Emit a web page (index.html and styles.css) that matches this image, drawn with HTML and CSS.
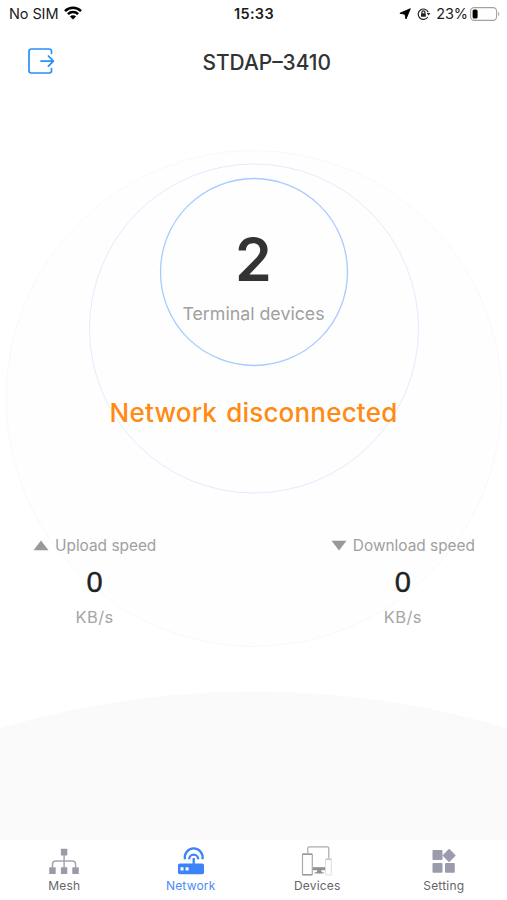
FILE: index.html
```html
<!DOCTYPE html>
<html lang="en">
<head>
<meta charset="utf-8">
<title>STDAP–3410</title>
<link rel="stylesheet" href="styles.css">
</head>
<body>
<div class="app">
  <div class="status">
    <div class="status-left">
      <span class="carrier">No SIM</span>
      <svg class="wifi" width="18" height="14" viewBox="0 0 18 14" fill="none" stroke="#000" stroke-width="2.5">
        <path d="M1 5.1a11.4 11.4 0 0 1 16 0"/>
        <path d="M3.9 8.2a7.2 7.2 0 0 1 10.2 0"/>
        <path d="M9 13.6L5.900 10.600a4.400 4.400 0 0 1 6.200 0z" fill="#000" stroke="none"/>
      </svg>
    </div>
    <span class="clock">15:33</span>
    <div class="status-right">
      <svg width="12" height="12" viewBox="0 0 12 12"><path d="M11.300.7L7 11 6 6.200.9 5.300z" fill="#000" stroke="#000" stroke-width=".9" stroke-linejoin="round"/></svg>
      <svg class="lock" width="14" height="12" viewBox="0 0 14 12" fill="none" stroke="#222" stroke-width="1.200">
        <path d="M10.800 9A5.200 5.200 0 1 1 11.200 4.200"/>
        <path d="M9.800 5h3.600l-1.800 2.600z" fill="#222" stroke="none"/>
        <path d="M4.900 5.500V4.300a1.500 1.500 0 0 1 3 0v1.200"/>
        <rect x="4" y="5.200" width="4.800" height="3.600" rx=".5" fill="#222" stroke="none"/>
      </svg>
      <span class="percent">23%</span>
      <svg width="31" height="14" viewBox="0 0 31 14">
        <rect x=".6" y=".6" width="26" height="12.800" rx="3.600" fill="none" stroke="#a2a2a2" stroke-width="1.100"/>
        <rect x="2.600" y="2.500" width="5" height="9" rx="1.600" fill="#000"/>
        <path d="M28.200 4.500q2.200 2.500 0 5z" fill="#a2a2a2"/>
      </svg>
    </div>
  </div>

  <header class="header">
    <svg class="exit" width="28" height="28" viewBox="0 0 28 28" fill="none" stroke="#2490f8" stroke-width="1.700" stroke-linecap="round" stroke-linejoin="round">
      <path d="M24.500 6.300V4.200a2.200 2.200 0 0 0-2.200-2.200H4.200A2.200 2.200 0 0 0 2 4.200v19.600A2.200 2.200 0 0 0 4.200 26h18.100a2.200 2.200 0 0 0 2.200-2.200v-2.100"/>
      <path d="M14 14.100h12M21.400 9l5 5.100-5 5.100"/>
    </svg>
    <h1 class="title">STDAP–3410</h1>
  </header>

  <main class="main">
    <svg class="backdrop" width="507" height="744" viewBox="0 96 507 744" fill="none">
      <circle cx="254" cy="1582" r="890.500" fill="#fafafa"/>
      <circle cx="254" cy="398.500" r="248" fill="#fefefe" stroke="#f7f9fa"/>
      <circle cx="254" cy="328.500" r="164.500" fill="#fefefe" stroke="#e5ebfd"/>
      <circle cx="254" cy="272" r="93.500" fill="#fefefe" stroke="#a6cbff" stroke-width="1.300"/>
    </svg>
    <section class="summary">
      <div class="count">2</div>
      <div class="caption"><span>Terminal devices</span></div>
      <div class="state"><span>Network disconnected</span></div>
    </section>
    <section class="speeds">
      <div class="speed">
        <div class="speed-label"><svg width="16" height="11" viewBox="0 0 16 11"><path d="M8 .5L15.500 10.300H.5z" fill="#999"/></svg><span class="up">Upload speed</span></div>
        <div class="value">0</div>
        <div class="unit">KB/s</div>
      </div>
      <div class="speed">
        <div class="speed-label"><svg width="16" height="11" viewBox="0 0 16 11"><path d="M8 10.500L.5.700h15z" fill="#999"/></svg><span class="down">Download speed</span></div>
        <div class="value">0</div>
        <div class="unit">KB/s</div>
      </div>
    </section>
  </main>

  <nav class="tabs">
    <a class="tab">
      <svg width="32" height="32" viewBox="0 0 32 32">
        <g fill="#9b9ba8"><rect x="12.900" y="3.800" width="6.400" height="6.600" rx=".5"/><rect x="1.200" y="22.200" width="6.500" height="6.800" rx=".5"/><rect x="12.900" y="22.200" width="6.400" height="6.800" rx=".5"/><rect x="24.300" y="22.200" width="6.500" height="6.800" rx=".5"/></g>
        <path d="M16.100 10v13M4.500 22.500v-3.300q0-3.200 3.200-3.200h16.700q3.200 0 3.200 3.200v3.300" fill="none" stroke="#a5a5ae" stroke-width="1.500"/>
      </svg>
      <span>Mesh</span>
    </a>
    <a class="tab active">
      <svg width="32" height="32" viewBox="0 0 32 32">
        <rect x="3" y="18.500" width="26" height="10.700" rx="1.800" fill="#3c83f7"/>
        <path d="M5.500 22.200h3v3.200h-3zM10.600 22.200h3v3.200h-3z" fill="#fff"/>
        <g fill="none" stroke="#3c83f7" stroke-width="2.300"><path d="M18.700 19v-6"/><path d="M10 14.200A8.900 8.900 0 1 1 27.400 14.200"/><path d="M14.200 14.200a4.500 4.500 0 1 1 9 0"/></g>
      </svg>
      <span>Network</span>
    </a>
    <a class="tab">
      <svg width="32" height="32" viewBox="0 0 32 32" fill="none" stroke="#aaa" stroke-width="1.200">
        <path d="M6.800 8.500V3.300q0-1.500 1.500-1.500h18q1.500 0 1.500 1.500v10.300"/>
        <rect x="1.500" y="8.800" width="9.800" height="21.200" rx="1"/>
        <path d="M1.500 9.300h9.800M1.500 29.700h9.800" stroke="#999" stroke-width="1.300"/>
        <path d="M11.800 22.200h12.500v3h-12.500z" fill="#909096" stroke="none"/>
        <path d="M16.300 25h3.800l.6 2.300h2v1.300h-9v-1.300h2z" fill="#909096" stroke="none"/>
        <rect x="24.600" y="14" width="5.700" height="16" rx=".8" stroke="#ddd" stroke-width="1"/>
        <path d="M24.600 14.200h5.700" stroke="#bbb"/>
      </svg>
      <span>Devices</span>
    </a>
    <a class="tab">
      <svg width="32" height="32" viewBox="0 0 32 32" fill="#9b9bae">
        <rect x="4.500" y="5" width="10" height="10" rx="1"/>
        <path d="M21.700 4.200l5.600 5.700q.5.600 0 1.200l-5.600 5.700q-.6.400-1.200 0l-5.600-5.700q-.5-.6 0-1.200l5.600-5.700q.6-.4 1.200 0z"/>
        <rect x="4.500" y="18" width="10" height="9.800" rx="1"/><rect x="17" y="18" width="9.800" height="9.800" rx="1"/>
      </svg>
      <span>Setting</span>
    </a>
  </nav>
</div>
</body>
</html>
```

FILE: styles.css
```css
* { box-sizing: border-box; }
body { margin: 0; background: #fff; font-family: Inter, "Liberation Sans", sans-serif; }
svg { display: block; flex: none; }
.app { display: flex; flex-direction: column; width: 507px; height: 900px; overflow: hidden; }
.status { display: grid; grid-template-columns: 1fr auto 1fr; align-items: center; height: 28px; padding: 0 6px 0 9px; color: #1c1c1c; font-size: 14.5px; line-height: 28px; }
.status-left { display: flex; align-items: center; gap: 6px; }
.carrier { letter-spacing: -.1px; }
.status-right { display: flex; align-items: center; justify-content: flex-end; }
.wifi { margin-top: -2px; }
.clock { font-weight: 600; letter-spacing: .3px; margin-left: -2px; }
.lock { margin: 0 5px 0 6px; }
.percent { margin-right: 2px; letter-spacing: -.1px; }
.header { display: flex; align-items: center; justify-content: space-between; height: 68px; padding: 0 176px 0 27px; }
.exit { margin-top: -3px; }
.title { margin: 0; padding-top: 2px; font-size: 20.9px; line-height: 66px; font-weight: 500; color: #333; white-space: nowrap; }
.main { position: relative; display: flex; flex-direction: column; height: 744px; }
.backdrop { position: absolute; inset: 0; }
.summary { position: relative; display: flex; flex-direction: column; align-items: center; padding-top: 124px; text-align: center; white-space: nowrap; }
.count { height: 80px; font-size: 59px; line-height: 79px; font-weight: 600; color: #333; }
.caption { height: 28px; font-size: 17.8px; line-height: 28px; color: #a0a0a0; }
.state { height: 40px; margin-top: 65px; font-size: 26px; line-height: 40px; font-weight: 500; color: #ff8a14; letter-spacing: .2px; word-spacing: 2px; }
.speeds { position: relative; display: flex; justify-content: space-between; margin-top: 99px; padding: 0 32px 0 33px; }
.speed { display: flex; flex-direction: column; align-items: center; white-space: nowrap; }
.speed-label { display: flex; align-items: center; gap: 6px; height: 26px; font-size: 15.4px; color: #a0a0a0; }
.value { height: 36px; margin-top: 6px; font-family: "Liberation Sans", sans-serif; font-size: 29px; line-height: 36px; color: #222; -webkit-text-stroke: .4px #222; }
.unit { height: 24px; margin-top: 5px; font-size: 16.5px; line-height: 24px; letter-spacing: .4px; color: #a6a6a6; }
.tabs { display: grid; grid-template-columns: repeat(4, 1fr); height: 60px; padding-left: 1px; background: #fff; }
.tab { display: flex; flex-direction: column; align-items: center; padding-top: 5px; font-size: 12px; line-height: 18px; letter-spacing: .2px; color: #666; }
.active { color: #4a8bf6; }
```
